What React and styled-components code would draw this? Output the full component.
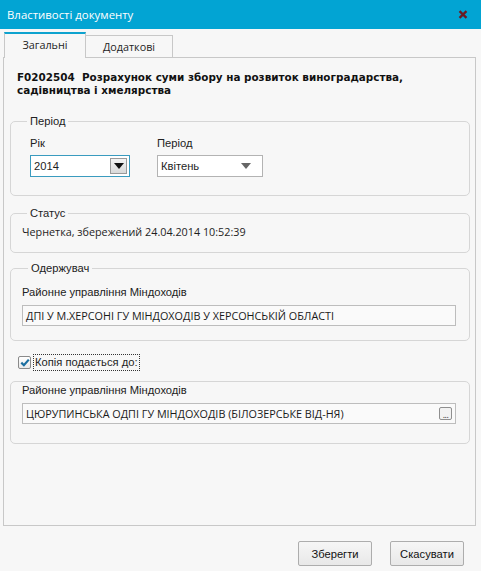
import React from 'react';
import styled, { createGlobalStyle } from 'styled-components';

const GlobalStyle = createGlobalStyle`
  body {
    margin: 0;
    background: #f7f7f7;
    font-family: "Open Sans", "Noto Sans", sans-serif;
    font-size: 10.8px;
    color: #1e1e1e;
  }
`;

const labelFont = `font-family: "Liberation Sans", Arial, sans-serif; font-size: 11.2px;`;

const Window = styled.div`
  width: 481px;
  height: 571px;
  display: flex;
  flex-direction: column;
  background: #f7f7f7;
  box-sizing: border-box;
`;

const TitleBar = styled.div`
  height: 29px;
  background: #02a4d3;
  display: flex;
  align-items: center;
  justify-content: space-between;
  padding: 0 13px 0 7px;
  color: #fff;
  font-size: 11.4px;
  flex-shrink: 0;
`;

const Body = styled.div`
  padding: 3px 5px 0 3px;
  display: flex;
  flex-direction: column;
`;

const TabStrip = styled.div`
  display: flex;
  align-items: flex-end;
  padding-left: 1px;
  height: 25px;
`;

const Tab = styled.div`
  box-sizing: border-box;
  height: ${p => (p.$active ? '26px' : '22px')};
  width: ${p => p.$width}px;
  display: flex;
  align-items: center;
  justify-content: center;
  border: 1px solid #c8c8c8;
  border-top: ${p => (p.$active ? '2px solid #0ea3cf' : '1px solid #c8c8c8')};
  border-bottom: none;
  border-left: ${p => (p.$active ? '1px solid #c8c8c8' : 'none')};
  background: #f7f7f7;
  margin-bottom: ${p => (p.$active ? '-1px' : '0')};
  position: relative;
  z-index: ${p => (p.$active ? 1 : 0)};
  padding-bottom: ${p => (p.$active ? '3px' : '0')};
`;

const Panel = styled.div`
  border: 1px solid #c8c8c8;
  height: 469px;
  box-sizing: border-box;
  padding: 13px 5px 0 6px;
  display: flex;
  flex-direction: column;
`;

const Heading = styled.div`
  font-family: "DejaVu Sans", Verdana, sans-serif;
  font-weight: bold;
  font-size: 10.4px;
  line-height: 13px;
  padding-left: 7px;
  margin-bottom: 17px;
  color: #111;
`;

const Group = styled.fieldset`
  margin: 0 0 ${p => p.$gap || 0}px 0;
  padding: ${p => p.$pad || '6px 13px 8px 10px'};
  border: 1px solid #d6d6d6;
  border-radius: 5px;
  height: ${p => p.$height}px;
  box-sizing: border-box;
  min-width: 0;
`;

const Legend = styled.legend`
  padding: 0 3px;
  margin-left: 6px;
  ${labelFont}
  line-height: 15px;
  color: #222;
`;

const Row = styled.div`
  display: flex;
  gap: 27px;
  padding-left: 9px;
`;

const Field = styled.div`
  display: flex;
  flex-direction: column;
  gap: 4px;
`;

const Label = styled.div`
  ${labelFont}
  line-height: 16px;
  color: #222;
`;

const Select = styled.div`
  box-sizing: border-box;
  width: ${p => p.$width}px;
  height: 22px;
  display: flex;
  align-items: center;
  justify-content: space-between;
  padding: 0 2px 0 3px;
  border: 1px solid ${p => (p.$focused ? '#3a9bbf' : '#b3b3b3')};
  background: #fff;
  ${labelFont}
`;

const ArrowBox = styled.div`
  width: 17px;
  height: 16px;
  box-sizing: border-box;
  display: flex;
  align-items: center;
  justify-content: center;
  border: 1px solid ${p => (p.$boxed ? '#9a9a9a' : 'transparent')};
  background: ${p => (p.$boxed ? 'linear-gradient(#f4f4f4, #d9d9d9)' : 'transparent')};
  margin-right: ${p => (p.$boxed ? '0' : '6px')};
`;

const Arrow = styled.div`
  width: 0;
  height: 0;
  border-left: 5px solid transparent;
  border-right: 5px solid transparent;
  border-top: 6px solid ${p => p.$color};
`;

const StatusText = styled.div`
  padding: 3px 0 0 1px;
  font-size: 10.8px;
`;

const Input = styled.div`
  box-sizing: border-box;
  height: 21px;
  display: flex;
  align-items: center;
  justify-content: space-between;
  padding: 0 2px 0 3px;
  border: 1px solid #bdbdbd;
  background: #fafafa;
  font-size: 10.8px;
  margin-top: 5px;
  color: #1a1a1a;
`;

const DotsButton = styled.div`
  width: 13px;
  height: 13px;
  box-sizing: border-box;
  border: 1px solid #8f8f8f;
  border-radius: 2px;
  background: #f2f2f2;
  display: flex;
  align-items: flex-end;
  justify-content: center;
  font-size: 9px;
  line-height: 9px;
  letter-spacing: -0.5px;
  color: #333;
  margin-right: 1px;
`;

const CheckRow = styled.div`
  display: flex;
  align-items: center;
  gap: 2px;
  padding: 2px 0 0 8px;
  height: 40px;
  box-sizing: border-box;
`;

const CheckBox = styled.div`
  width: 11px;
  height: 11px;
  border: 1px solid #8a8a8a;
  border-radius: 2px;
  background: linear-gradient(#ffffff, #e9e9e9);
  display: flex;
  align-items: center;
  justify-content: center;
`;

const CheckLabel = styled.div`
  border: 1px dotted #333;
  padding: 0 1px;
  line-height: 15px;
  ${labelFont}
`;

const Footer = styled.div`
  display: flex;
  justify-content: flex-end;
  gap: 18px;
  padding: 15px 12px 0 0;
`;

const Button = styled.div`
  width: 74px;
  height: 25px;
  box-sizing: border-box;
  border: 1px solid #adadad;
  border-radius: 2px;
  background: linear-gradient(#f6f6f6, #e8e8e8);
  display: flex;
  align-items: center;
  justify-content: center;
  ${labelFont}
  color: #111;
`;

const CloseIcon = () => (
  <svg width="10" height="9" viewBox="0 0 10 9">
    <path d="M1.5 1.2 L8.5 7.8 M8.5 1.2 L1.5 7.8" stroke="#6a1a22" strokeWidth="2.3" strokeLinecap="butt" />
  </svg>
);

const CheckMark = () => (
  <svg width="10" height="9" viewBox="0 0 10 9">
    <path d="M1.3 4.6 L3.9 7.2 L8.8 1.6" stroke="#1a6ea0" strokeWidth="2.2" fill="none" />
  </svg>
);

export default function App() {
  return (
    <Window>
      <GlobalStyle />
      <TitleBar>
        <span>Властивості документу</span>
        <CloseIcon />
      </TitleBar>
      <Body>
        <TabStrip>
          <Tab $active $width={82}>Загальні</Tab>
          <Tab $width={87}>Додаткові</Tab>
        </TabStrip>
        <Panel>
          <Heading>
            F0202504&nbsp;&nbsp;Розрахунок суми збору на розвиток виноградарства,
            <br />
            садівництва і хмелярства
          </Heading>

          <Group $height={82} $gap={10} $pad="6px 13px 8px 10px">
            <Legend>Період</Legend>
            <Row>
              <Field>
                <Label>Рік</Label>
                <Select $width={100} $focused>
                  <span>2014</span>
                  <ArrowBox $boxed>
                    <Arrow $color="#111" />
                  </ArrowBox>
                </Select>
              </Field>
              <Field>
                <Label>Період</Label>
                <Select $width={106}>
                  <span>Квітень</span>
                  <ArrowBox>
                    <Arrow $color="#666" />
                  </ArrowBox>
                </Select>
              </Field>
            </Row>
          </Group>

          <Group $height={47} $gap={8} $pad="0 10px 0 10px">
            <Legend>Статус</Legend>
            <StatusText>Чернетка, збережений 24.04.2014 10:52:39</StatusText>
          </Group>

          <Group $height={80} $pad="8px 13px 8px 11px">
            <Legend>Одержувач</Legend>
            <Label>Районне управління Міндоходів</Label>
            <Input>ДПІ У М.ХЕРСОНІ ГУ МІНДОХОДІВ У ХЕРСОНСЬКІЙ ОБЛАСТІ</Input>
          </Group>

          <CheckRow>
            <CheckBox>
              <CheckMark />
            </CheckBox>
            <CheckLabel>Копія подається до:</CheckLabel>
          </CheckRow>

          <Group $height={63} $pad="0 13px 8px 11px">
            <Label>Районне управління Міндоходів</Label>
            <Input>
              <span>ЦЮРУПИНСЬКА ОДПІ ГУ МІНДОХОДІВ (БІЛОЗЕРСЬКЕ ВІД-НЯ)</span>
              <DotsButton>...</DotsButton>
            </Input>
          </Group>
        </Panel>
        <Footer>
          <Button>Зберегти</Button>
          <Button>Скасувати</Button>
        </Footer>
      </Body>
    </Window>
  );
}
